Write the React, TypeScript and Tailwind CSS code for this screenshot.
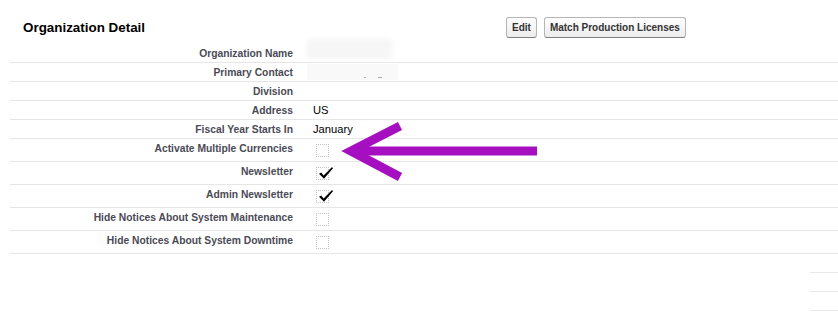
const rows = [
  { label: 'Organization Name', kind: 'blurName' },
  { label: 'Primary Contact', kind: 'blurContact' },
  { label: 'Division', kind: 'text', value: '' },
  { label: 'Address', kind: 'text', value: 'US' },
  { label: 'Fiscal Year Starts In', kind: 'text', value: 'January' },
  { label: 'Activate Multiple Currencies', kind: 'check', checked: false },
  { label: 'Newsletter', kind: 'check', checked: true },
  { label: 'Admin Newsletter', kind: 'check', checked: true },
  { label: 'Hide Notices About System Maintenance', kind: 'check', checked: false },
  { label: 'Hide Notices About System Downtime', kind: 'check', checked: false }
] as const;

function Checkbox({ checked }: { checked: boolean }) {
  return (
    <div className="relative ml-[3px] h-[13px] w-[13px] border border-dotted border-[#c4c4c4]">
      {checked ? (
        <svg className="absolute left-[1px] top-[-1px]" width="16" height="13" viewBox="0 0 16 13">
          <path d="M1 6.8 L3.2 5.6 L5.6 8.6 L13.8 0.2 L15.2 1 L6 11.8 Z" fill="#000" />
        </svg>
      ) : null}
    </div>
  );
}

function Button({ children }: { children: React.ReactNode }) {
  return (
    <button className="h-[21px] rounded-[3px] border border-[#b5b5b5] border-b-[#7f7f7f] bg-gradient-to-b from-[#ffffff] to-[#ececec] px-[5px] text-[10px] font-bold text-[#333]">
      {children}
    </button>
  );
}

export default function App() {
  return (
    <div
      className="relative h-[314px] w-[838px] overflow-hidden bg-white"
      style={{ fontFamily: '"Liberation Sans", Arial, sans-serif' }}
    >
      <div className="flex items-center pl-[23px] pt-[17px]">
        <h2 className="w-[483px] text-[13.4px] font-bold leading-[21px] text-black">Organization Detail</h2>
        <div className="flex gap-[7px]">
          <Button>Edit</Button>
          <Button>Match Production Licenses</Button>
        </div>
      </div>

      <div className="mt-[6px] pl-[10px]">
        {rows.map((row) => (
          <div
            key={row.label}
            className={`flex border-b border-[#e6e6e6] ${row.kind === 'check' ? 'h-[23px]' : 'h-[19px]'}`}
          >
            <div className="w-[293px] shrink-0 pr-[10px] pt-[3px] text-right text-[10.3px] font-bold leading-[13px] text-[#4a4a56]">
              {row.label}
            </div>
            <div className="flex-1 pl-[10px]">
              {row.kind === 'text' ? (
                <div className="pt-[2px] text-[11.2px] leading-[14px] text-black">{row.value}</div>
              ) : null}
              {row.kind === 'check' ? (
                <div className="pt-[5px]">
                  <Checkbox checked={row.checked} />
                </div>
              ) : null}
              {row.kind === 'blurName' ? (
                <div className="-ml-[6px] -mt-[5px] h-[20px] w-[85px] bg-[#f6f6f6] blur-[2px]" />
              ) : null}
              {row.kind === 'blurContact' ? (
                <div className="-ml-[6px] mt-[1px] flex h-[16px] w-[91px] items-end justify-center gap-[12px] bg-[#f9f9f9] pb-[2px] pl-[40px]">
                  <span className="h-[1px] w-[2px] bg-[#aaa]" />
                  <span className="h-[1px] w-[4px] bg-[#aaa]" />
                </div>
              ) : null}
            </div>
          </div>
        ))}
      </div>

      <div className="flex flex-col items-end">
        <div className="h-[19px] w-[28px] border-b border-[#e8e8e8]" />
        <div className="h-[19px] w-[28px] border-b border-[#e8e8e8]" />
        <div className="h-[19px] w-[28px] border-b border-[#e8e8e8]" />
      </div>

      <svg className="pointer-events-none absolute left-0 top-0" width="838" height="314">
        <polyline
          points="400,126 351,151 400,177"
          fill="none"
          stroke="#a50fbf"
          strokeWidth="9"
          strokeLinejoin="miter"
        />
        <line x1="352" y1="151" x2="537" y2="151" stroke="#a50fbf" strokeWidth="9" />
      </svg>
    </div>
  );
}
